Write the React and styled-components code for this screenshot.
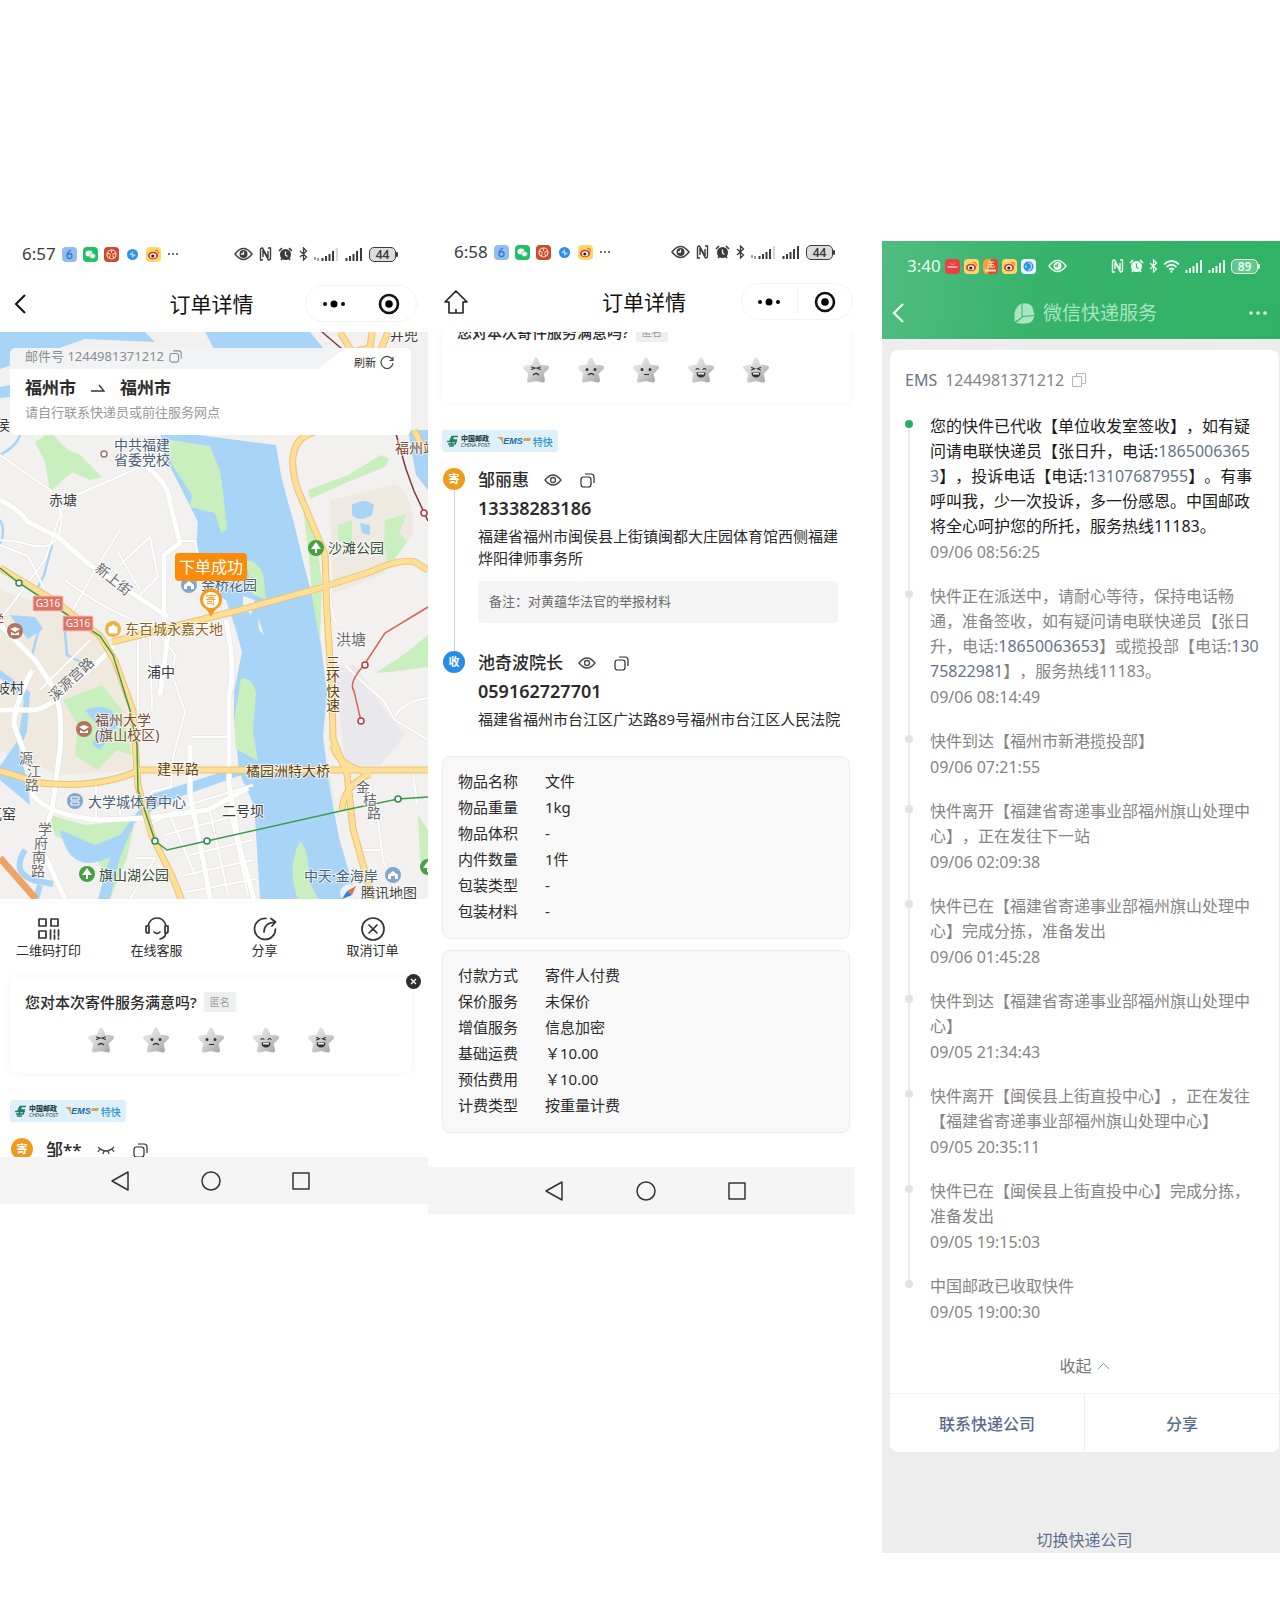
import { createGlobalStyle, styled } from "styled-components";

const GlobalStyle = createGlobalStyle`
  * { box-sizing: border-box; }
  body {
    margin: 0;
    background: #fff;
    color: #2b2b2b;
    font-family: "Noto Sans", "Noto Sans CJK SC", sans-serif;
    text-spacing-trim: space-all;
  }
  button { padding: 0; border: 0; background: none; color: inherit; font: inherit; cursor: pointer; }
  a { color: inherit; text-decoration: none; }
  h1, h2, p, ol, dl, dd { margin: 0; padding: 0; }
  svg { display: block; flex: none; }
`;

const Page = styled.main`
  display: grid;
  grid-template-columns: 428fr 427fr 425fr;
  align-items: start;
  padding-top: 230px;
`;

const Screen = styled.section`
  min-width: 0;
  overflow: hidden;
`;

const TrackingScreen = styled.section`
  min-width: 0;
  margin: 11px 0 0 27px;
  background: #ededed;
`;

/* ---------- status bar ---------- */

const StatusBar = styled.div`
  display: flex;
  align-items: center;
  justify-content: space-between;
  height: ${(p) => p.$height}px;
  padding: 0 ${(p) => p.$right}px 0 ${(p) => p.$left}px;
  color: ${(p) => p.$color || "#3c3c3c"};
`;

const StatusGroup = styled.div`
  display: flex;
  align-items: center;
  gap: ${(p) => p.$gap}px;
`;

const Time = styled.span`
  font-size: 17px;
  line-height: 24px;
`;

const Battery = styled.span`
  position: relative;
  width: 27px;
  height: 15px;
  border: 1px solid currentColor;
  border-radius: 5px;
  background: ${(p) => p.$fill};
  font-size: 12px;
  font-weight: 600;
  line-height: 13px;
  text-align: center;

  &::after {
    content: "";
    position: absolute;
    top: 4px;
    right: -3px;
    width: 2px;
    height: 5px;
    border-radius: 1px;
    background: currentColor;
  }
`;

const AppIcon = ({ kind }) => (
  <svg width="15" height="15" viewBox="0 0 15 15" aria-hidden="true">
    {kind === "browser" && (
      <>
        <rect width="15" height="15" rx="4" fill="#8fbdf0" />
        <path d="M9 3Q5 5 5 9a2.500 2.500 0 1 0 2.500-2.500Q6 6.500 5 9" fill="none" stroke="#3675cf" strokeWidth="1.300" />
      </>
    )}
    {kind === "wechat" && (
      <>
        <rect width="15" height="15" rx="4" fill="#22c064" />
        <ellipse cx="6" cy="6.500" rx="3.500" ry="3" fill="#fff" />
        <ellipse cx="9.500" cy="9" rx="3" ry="2.500" fill="#fff" stroke="#22c064" strokeWidth=".6" />
      </>
    )}
    {kind === "court" && (
      <>
        <rect width="15" height="15" rx="4" fill="#cf4a2c" />
        <circle cx="7.500" cy="7.500" r="4.500" fill="none" stroke="#ffe0c8" strokeWidth="1.200" />
        <path d="M7.500 3v3M3.500 6l3 1.500M11.500 6l-3 1.500M5 11l1.500-2.500M10 11 8.500 8.500" stroke="#ffe0c8" strokeWidth="1.100" />
      </>
    )}
    {kind === "round" && (
      <>
        <circle cx="7.500" cy="7.500" r="5.500" fill="#2b90e8" />
        <path d="m4 8 4-4v3l3 1-4 3V8z" fill="#a9d8ff" />
      </>
    )}
    {kind === "safari" && (
      <>
        <rect width="15" height="15" rx="4" fill="#e9f5ff" />
        <circle cx="7.500" cy="7.500" r="5" fill="#2b90e8" />
        <path d="M7 4a3.500 3.500 0 0 1 0 7M5 6v3" fill="none" stroke="#b9defc" strokeWidth="1.200" />
      </>
    )}
    {kind === "weibo" && (
      <>
        <rect width="15" height="15" rx="4" fill="#ffd66a" />
        <ellipse cx="7" cy="8.500" rx="5" ry="3.800" fill="#d5382a" />
        <ellipse cx="7" cy="8.800" rx="3.200" ry="2.500" fill="#fff" />
        <circle cx="6.800" cy="9" r="1.600" fill="#222" />
        <path d="M9 3.500q3.500-.5 3.500 3" fill="none" stroke="#e9762a" strokeWidth="1.200" />
      </>
    )}
    {kind === "red" && (
      <>
        <rect width="15" height="15" rx="4" fill="#e8413f" />
        <path d="M2.500 8h10" stroke="#ffc9c2" strokeWidth="1.500" />
        <path d="M5 4.500q2.500 2 5 0" fill="none" stroke="#f58d83" />
      </>
    )}
    {kind === "shop" && (
      <>
        <rect width="15" height="15" rx="4" fill="#e8452e" />
        <path d="M0 4q0-4 4-4h4L5 15H4q-4 0-4-4Z" fill="#f2a23c" />
        <path d="M5 3h6M5 5.500h6M4 8h8M8 3v5" fill="none" stroke="#ffe9b8" strokeWidth="1.100" />
        <path d="M2 11.500h11" stroke="#ffe9b8" strokeWidth="2" />
      </>
    )}
  </svg>
);

const EyeStatus = ({ hollow }) => (
  <svg width="19" height="14" viewBox="0 0 19 14" aria-hidden="true">
    <path d="M1 7q8.500-11 17 0-8.500 11-17 0Z" fill="none" stroke="currentColor" strokeWidth="1.400" />
    <circle cx="9.500" cy="7" r="4" fill="currentColor" />
    <path d="M9.500 4.500V7H7" fill="none" stroke={hollow} strokeWidth="1.300" />
  </svg>
);

const NfcIcon = () => (
  <svg width="13" height="14" viewBox="0 0 13 14" aria-hidden="true">
    <path d="M4 13H1.500V3Q1.500 1 3.500 1L9 11V4" fill="none" stroke="currentColor" strokeWidth="1.400" />
    <path d="M9 1h2.500V11Q11.500 13 9.500 13L4 3v7" fill="none" stroke="currentColor" strokeWidth="1.400" />
  </svg>
);

const AlarmIcon = ({ hollow }) => (
  <svg width="15" height="14" viewBox="0 0 15 14" aria-hidden="true">
    <circle cx="7.500" cy="7.500" r="5.500" fill="currentColor" />
    <path d="M1 4 4 1M14 4l-3-3M3 13l1.500-2M12 13l-1.500-2" stroke="currentColor" strokeWidth="1.700" />
    <path d="M7.500 4.500v3.500l2 1.500" fill="none" stroke={hollow} strokeWidth="1.200" />
  </svg>
);

const BluetoothIcon = () => (
  <svg width="9" height="14" viewBox="0 0 9 14" aria-hidden="true">
    <path d="m1 4 6.500 6L4.500 13V1l3 3L1 10" fill="none" stroke="currentColor" strokeWidth="1.300" />
  </svg>
);

const WifiIcon = () => (
  <svg width="17" height="14" viewBox="0 0 17 14" aria-hidden="true">
    <path d="M1 5.500q7.500-7 15 0M3.500 8q5-4.500 10 0M6 10.500q2.500-2 5 0" fill="none" stroke="currentColor" strokeWidth="1.700" />
    <circle cx="8.500" cy="12.500" r="1.200" fill="currentColor" />
  </svg>
);

const SignalIcon = ({ weak }) => (
  <svg width={weak ? 25 : 18} height="14" viewBox={weak ? "-7 0 25 14" : "0 0 18 14"} aria-hidden="true">
    {weak && <path d="M-6 10v3M-3 11v3" stroke="currentColor" />}
    <path d="M1.500 14v-3M5 14V9M8.500 14V7M12 14V4" stroke="currentColor" strokeWidth="2" />
    <path d="M16 14V1" stroke="currentColor" strokeWidth="2" opacity={weak ? 0.2 : 1} />
  </svg>
);

const PhoneStatus = ({ time, height, left, right }) => (
  <StatusBar $height={height} $left={left} $right={right}>
    <StatusGroup $gap={6}>
      <Time>{time}</Time>
      <AppIcon kind="browser" />
      <AppIcon kind="wechat" />
      <AppIcon kind="court" />
      <AppIcon kind="round" />
      <AppIcon kind="weibo" />
      <svg width="13" height="4" viewBox="0 0 13 4" fill="#444" aria-hidden="true">
        <circle cx="2" cy="2" r="1" />
        <circle cx="6" cy="2" r="1" />
        <circle cx="10" cy="2" r="1" />
      </svg>
    </StatusGroup>
    <StatusGroup $gap={6}>
      <EyeStatus hollow="#fff" />
      <NfcIcon />
      <AlarmIcon hollow="#fff" />
      <BluetoothIcon />
      <SignalIcon weak />
      <SignalIcon />
      <Battery $fill="#dcdcdc">44</Battery>
    </StatusGroup>
  </StatusBar>
);

/* ---------- title bar ---------- */

const TitleBar = styled.header`
  display: grid;
  grid-template-columns: 1fr auto 1fr;
  align-items: center;
  height: ${(p) => p.$height}px;
  padding: 0 ${(p) => p.$right}px 3px ${(p) => p.$left}px;
  color: #111;
`;

const Title = styled.h1`
  padding-right: 8px;
  font-size: 21px;
  font-weight: 400;
  line-height: 30px;
`;

const Capsule = styled.div`
  display: flex;
  justify-self: end;
  width: 112px;
  height: 37px;
  border: 1px solid #f3f3f3;
  border-radius: 19px;
`;

const CapsuleButton = styled.button`
  flex: 1;
  display: grid;
  place-items: center;
`;

const CapsuleDivider = styled.span`
  width: 1px;
  margin: 6px 0;
  background: #f0f0f0;
`;

const MiniProgramCapsule = ({ divided }) => (
  <Capsule>
    <CapsuleButton aria-label="更多">
      <svg width="24" height="8" viewBox="0 0 24 8">
        <circle cx="3" cy="4" r="2" />
        <circle cx="12" cy="4" r="3.500" />
        <circle cx="21" cy="4" r="2" />
      </svg>
    </CapsuleButton>
    {divided && <CapsuleDivider />}
    <CapsuleButton aria-label="关闭">
      <svg width="22" height="22" viewBox="0 0 22 22">
        <circle cx="11" cy="11" r="9" fill="none" stroke="#111" strokeWidth="2.600" />
        <circle cx="11" cy="11" r="3.800" />
      </svg>
    </CapsuleButton>
  </Capsule>
);

const IconButton = styled.button`
  display: grid;
  place-items: center;
  justify-self: ${(p) => p.$align || "start"};
`;

const ChevronLeft = ({ width = 2 }) => (
  <svg width="12" height="20" viewBox="0 0 12 20">
    <path d="M11 1 2 10l9 9" fill="none" stroke="currentColor" strokeWidth={width} />
  </svg>
);

/* ---------- map ---------- */

const MapArea = styled.div`
  position: relative;
`;

const MapSvg = styled.svg`
  width: 100%;
  height: auto;
  text {
    font-size: 14px;
    fill: #3b3b3b;
    stroke: #fff;
    stroke-width: 2px;
    stroke-opacity: 0.7;
    paint-order: stroke;
  }
  .road { fill: #6b6b6b; }
  .blue { fill: #4d5f74; }
  .park { fill: #36523a; }
  .brown { fill: #7d4a36; }
  .shop { fill: #8f6420; }
  .major { fill: #5f4413; }
`;

const wideRoads = [
  "M0 500q20 10 28 22l30 15 32 28 78 52",
  "M145 465q25 20 25 38l10 40-16 12v70l4 10-8 60",
  "M0 625 35 660 55 690q8 25 5 60l-8 60-12 35 25 54",
  "M0 710h35q20-5 35-25l25-20 20-20",
  "M32 670q-18 35-18 55l15 40 4 30q15 20 65 25l50-2 60-8 40-22",
  "M226 620q10 50 3 75v90l10 60 15 54",
  "M190 745v50l15 75 5 29",
];

const roads = [
  "M0 455 50 490 62 515 60 530",
  "M60 530q-5 25-40 12L0 540",
  "M145 465 65 500 45 560 0 620",
  "M0 545 28 556 45 590",
  "M72 612 95 570 120 530",
  "M140 590 118 552M120 565l30-28 8 40-20 20",
  "M180 541h15l6 30",
  "M65 580q40 30 70 40M90 640 40 690",
  "M96 785v33M120 795v20",
  "M138 640v70M150 640l2 68M160 635l15 20-2 22 12 35-12 45-2 30-20 5v8",
  "M192 737h38",
  "M148 825l40-20 65-20M165 835l80-22M190 855l62-15M185 875l68-15M186 892l70-13M170 815l25 60M210 812l18 82M228 805l20 90",
  "M135 858h20l-25 41",
  "M345 665q20 20 38 35l12 20 33 20M395 716q10-15 33-18",
  "M332 580q-5 25 5 45M345 770 360 790M355 790q-10 5-5 18M413 774l4 30M375 800l8 60 12 30M360 850h20",
];

const CityMap = () => (
  <MapSvg viewBox="0 332 428 567" role="img" aria-label="地图">
    <rect y="332" width="428" height="567" fill="#f2f1ef" />
    <path d="M330 500l65-16q20 10 18 50l-30 40-50 20Z" fill="#eeeae2" />
    <path d="M0 590 60 610 110 640 130 720 132 770 60 775 0 750Z" fill="#efe9df" />
    <path d="M335 665h20l30 45 20 25-25 30h-35Z" fill="#e9e8ec" />
    {/* parks */}
    <g fill="#c8efbd">
      <path d="M35 442l15-10 18 18 12 5 22 22-12 3-18-8-22 20-5-30Z" />
      <path d="M308 490l40-15 33-20 8 4-4 8-35 14-40 18Z" />
      <path d="M338 525l14-5v24l-14-3ZM385 520l22-6-8 18 8 10-18 25-5-22Z" />
      <path d="M90 690l12-5 20 25 10 45-15-5-20 20-22-15 3-30-15-25Z" />
      <path d="M50 815l35 10 50-5-8 38-17 41H98q12-30-8-48l-35-15Z" />
      <path d="M376 673l30-20 22-18v32l-38 5ZM418 815l10 15v40l-8-10Z" />
    </g>
    {/* river and streams */}
    <g fill="#a8d4f8">
      <path d="M0 332h145l10 10-70-3-85 30ZM205 332h105l28 34-60-15-55 15ZM0 387l10-2v12l-10 1Z" />
      <path d="M160 430l4 25 14 27 10 20 10 20-2 28 8 14 2 26 20 10 10 30 6 22-8 40v25l5 55 18 40-2 6 6 95h100l-22-75-10-55-6-47 4-43-6-48-8-46-10-38-9-38-8-28-5-20-5-30Z" />
      <path d="M30 805 0 780v-14l18-26 6-40-24-22v-8l30 22-3 40-8 18 8 30Z" />
      <path d="M60 830l35 15 25-10 30-40 100-32v9l-85 30-30 20-15 35-10 42H98l12-42q-40 20-50-27Z" />
      <path d="M352 505q12-8 22 0l-2 10q-12 8-20 0ZM360 523l10 2v10l-8-2ZM408 430l8 45 12 15v-60Z" />
      <path d="M10 615l25 2 8 12-15 10-8-10ZM85 710q25-10 35 12l-20 28-8-5 8-16Z" />
    </g>
    <g fill="none" stroke="#a8d4f8" strokeWidth="2.500">
      <path d="M20 435q-4 12-20 20M0 520q6 10 0 25M52 545l-8 30-8 16M64 620l3 35 20 10M40 625l-8 30 12 15M308 332l18 24" />
      <path d="M25 850q-14 22 8 30l20 4M40 885l-4 14" strokeWidth="6" />
    </g>
    <g fill="#c8efbd">
      <path d="M170 440l40 6 10 25 4 30 3 28-6 4-6-20-25-6 2-12-20-30-6-20Z" />
      <path d="M246 560q16 2 18 20l2 20-14-6Z" />
      <path d="M241 678q12 0 15 15l-3 38 5 30-22-12-2-28Z" />
      <path d="M303 508l13 30 6 45-2 60-7-40-4-45ZM325 755l8 40 14 50-16-55ZM300 841q10 10 8 38l10 20h-20q-12-30 2-58Z" />
    </g>
    <path d="M243 596l12 4-4 15-8-10ZM258 617l6 18-5-5Z" fill="#f2f1ef" />
    {/* minor roads */}
    <g fill="none" strokeLinejoin="round">
      {roads.map((d) => <path key={d} d={d} stroke="#e3e1dd" strokeWidth="3" />)}
      {wideRoads.map((d) => <path key={d} d={d} stroke="#e3e1dd" strokeWidth="6" />)}
      {roads.map((d) => <path key={`${d}-top`} d={d} stroke="#fff" strokeWidth="2" />)}
      {wideRoads.map((d) => <path key={`${d}-top`} d={d} stroke="#fff" strokeWidth="5" />)}
    </g>
    {/* major roads */}
    {["#ecc277", "#fddf95"].map((stroke, i) => (
      <g key={stroke} fill="none" stroke={stroke} strokeWidth={i ? 5 : 7} strokeLinejoin="round">
        <path d="M340 332l12 20 18-4 2-16M388 332l-8 20M414 430l10 20M315 432q-20 5-22 25t10 45l22 52 2 60 5 80 1 45 14 35 6 55 14 50 6 25" />
        <path d="M112 642l68-17 60-15 80-22 50-16q30-14 45-10l13 8" />
        <path d="M0 568l55 33 45 35 15 25 18 50 5 75 14 50 20 40 16 40" />
        <path d="M0 771l40 12q60 6 100-13h288M333 745q5 22 38 28M342 810q2-25 28-36" />
      </g>
    ))}
    <path d="M0 858l36 41" stroke="#eea367" strokeWidth="7" />
    {/* rail lines */}
    <g fill="none" strokeWidth="1.500">
      <path d="M322 332l20 17M396 434l10 35 8 22 14 30" stroke="#7d3a42" />
      <path d="M428 607l-43 26-21 32q-16 18-10 26l7 30" stroke="#d26750" />
      <path d="M0 568l19 15 41 27 40 26 13 19 17 55 7 35 1 45 17 51 12 9 40-9 138-31 53-11 30-2" stroke="#3f9a4c" />
    </g>
    <g fill="#fff" strokeWidth="1.500">
      {[[19, 583], [155, 841], [207, 841], [398, 799]].map(([x, y]) => (
        <circle key={x} cx={x} cy={y} r="3" stroke="#2d8a55" />
      ))}
      {[[424, 513], [365, 665], [361, 721]].map(([x, y]) => (
        <circle key={x} cx={x} cy={y} r="3" stroke="#b73a45" />
      ))}
      <circle cx="104" cy="454" r="3" stroke="#9a7767" />
    </g>
    {/* G316 shields */}
    {[[33, 596], [63, 616]].map(([x, y]) => (
      <g key={x}>
        <rect x={x} y={y} width="30" height="15" rx="1" fill="#dd7465" stroke="#f3c5bd" />
        <text x={x + 15} y={y + 11} textAnchor="middle" style={{ fontSize: 10, fill: "#fff", stroke: "none" }}>G316</text>
      </g>
    ))}
    {/* points of interest */}
    {[[316, 548], [87, 874], [428, 867]].map(([x, y]) => (
      <g key={x}>
        <circle cx={x} cy={y} r="8" fill="#48a043" />
        <path d={`M${x} ${y - 6}l5 7h-4v4h-2v-4h-4Z`} fill="#fff" />
      </g>
    ))}
    {[[189, 585], [393, 875]].map(([x, y]) => (
      <g key={x}>
        <circle cx={x} cy={y} r="8" fill="#83a6cf" />
        <path d={`M${x - 5} ${y}l5-4 5 4v4h-3v-3h-4v3h-3Z`} fill="#fff" />
      </g>
    ))}
    {[[15, 631], [84, 729]].map(([x, y]) => (
      <g key={x}>
        <circle cx={x} cy={y} r="8" fill="#b4745d" />
        <path d={`M${x - 5} ${y - 2}l5-2 5 2-5 3ZM${x - 4} ${y + 1}l4 2 4-2v3h-8Z`} fill="#fff" />
      </g>
    ))}
    <circle cx="75" cy="801" r="8" fill="#83a6cf" />
    <path d="M71 797h8v3h-8zM71 802h8v3h-8z" fill="none" stroke="#fff" />
    <circle cx="113" cy="629" r="8" fill="#edb044" />
    <path d="M109 627h8v6h-8zM111 627q2-4 4 0" fill="#fff" stroke="#fff" />
    {/* labels */}
    <text x="390" y="340">井兜</text>
    <text x="-4" y="430">侯官</text>
    <text x="114" y="450" className="blue">中共福建</text>
    <text x="114" y="465" className="blue">省委党校</text>
    <text x="395" y="453" className="brown">福州站</text>
    <text x="49" y="505">赤塘</text>
    <text x="328" y="553" className="park">沙滩公园</text>
    <text x="201" y="590" className="blue">金桥花园</text>
    <text x="94" y="570" className="road" transform="rotate(39 94 570)">新上街</text>
    <text x="125" y="634" className="shop">东百城永嘉天地</text>
    <text x="336" y="645" className="road" style={{ fontSize: 15 }}>洪塘</text>
    <text x="-10" y="625" className="brown">学</text>
    <text x="-4" y="641" className="brown">)</text>
    <text x="147" y="677">浦中</text>
    <text x="-4" y="693">岐村</text>
    <text x="54" y="702" className="road" transform="rotate(-43 54 702)">溪源宫路</text>
    <text x="95" y="725" className="brown">福州大学</text>
    <text x="95" y="740" className="brown">(旗山校区)</text>
    <text className="major">
      <tspan x="326" y="667">三</tspan>
      <tspan x="326" y="681">环</tspan>
      <tspan x="326" y="696">快</tspan>
      <tspan x="326" y="710">速</tspan>
    </text>
    <text className="road">
      <tspan x="19" y="763">源</tspan>
      <tspan x="27" y="776">江</tspan>
      <tspan x="25" y="790">路</tspan>
    </text>
    <text x="157" y="774" className="major">建平路</text>
    <text x="246" y="776" className="major">橘园洲特大桥</text>
    <text x="88" y="807" className="blue">大学城体育中心</text>
    <text x="222" y="816">二号坝</text>
    <text x="-12" y="819">瓦窑</text>
    <text className="road">
      <tspan x="356" y="792">金</tspan>
      <tspan x="363" y="805">桔</tspan>
      <tspan x="367" y="818">路</tspan>
    </text>
    <text className="road">
      <tspan x="38" y="834">学</tspan>
      <tspan x="34" y="848">府</tspan>
      <tspan x="32" y="862">南</tspan>
      <tspan x="31" y="876">路</tspan>
    </text>
    <text x="99" y="880" className="park">旗山湖公园</text>
    <text x="304" y="881" className="blue">中天·金海岸</text>
    {/* provider mark */}
    <circle cx="349" cy="893" r="9" fill="#eaf3fb" />
    <path d="M356 886l-4 9-5-4Z" fill="#ec6b3a" />
    <path d="M342 899l5-8 5 4Z" fill="#2f7fd6" />
    <text x="361" y="898" style={{ fill: "#444" }}>腾讯地图</text>
    {/* pickup pin */}
    <path d="M211 617q-3-7-8-10a11 11 0 1 1 16 0q-5 3-8 10Z" fill="#f59a1c" />
    <circle cx="211" cy="600" r="8" fill="#fff" />
    <text x="211" y="604" textAnchor="middle" style={{ fontSize: 11, fill: "#f59a1c", stroke: "none" }}>寄</text>
    <rect x="175" y="553" width="72" height="28" rx="4" fill="#fa8c0c" />
    <text x="211" y="573" textAnchor="middle" style={{ fontSize: 16, fill: "#fff", stroke: "none" }}>下单成功</text>
  </MapSvg>
);

const MailCard = styled.div`
  position: absolute;
  top: 16px;
  left: 10px;
  right: 17px;
  overflow: hidden;
  border-radius: 6px;
  background: #fff;
`;

const MailTop = styled.div`
  display: flex;
  justify-content: space-between;
  height: 21px;
  background: #fff;
`;

const MailNumber = styled.div`
  display: flex;
  align-items: center;
  gap: 5px;
  width: 335px;
  padding: 0 15px 4px;
  background: #f1f3f5;
  clip-path: polygon(0 0, 100% 0, 92% 100%, 0 100%);
  color: #8d8d8d;
  font-size: 13px;
  line-height: 17px;
`;

const Refresh = styled.button`
  display: flex;
  align-items: center;
  align-self: flex-start;
  gap: 4px;
  height: 27px;
  margin-right: 17px;
  font-size: 11px;
`;

const Route = styled.p`
  display: flex;
  align-items: center;
  gap: 15px;
  padding: 6px 15px 0;
  font-size: 17px;
  font-weight: 700;
  line-height: 26px;
`;

const RouteHint = styled.p`
  padding: 2px 15px 14px;
  color: #999;
  font-size: 13px;
  line-height: 18px;
`;

const CopyIcon = ({ size = 15 }) => (
  <svg width={size} height={size} viewBox="0 0 15 15" fill="none" stroke="currentColor" strokeWidth="1.200">
    <rect x="1" y="4" width="10" height="10" rx="2.500" />
    <path d="M5 1h6q3 0 3 3v6" />
  </svg>
);

/* ---------- shared order blocks ---------- */

const Content = styled.div`
  padding: 0 ${(p) => p.$right}px 0 ${(p) => p.$left}px;
`;

const ClippedContent = styled(Content)`
  overflow: hidden;
  height: ${(p) => (p.$height ? `${p.$height}px` : "auto")};
`;

const Actions = styled.nav`
  display: flex;
  justify-content: space-between;
  padding: 18px 23px 18px 16px;
`;

const Action = styled.button`
  display: flex;
  flex-direction: column;
  align-items: center;
  width: 65px;
  font-size: 13px;
  line-height: 18px;
  white-space: nowrap;
`;

const RatingCard = styled.section`
  position: relative;
  margin-top: ${(p) => (p.$scrolled ? "-25px" : "0")};
  padding: 13px 15px 19px;
  border-radius: 8px;
  box-shadow: 0 0 8px rgba(0, 0, 0, 0.05);
`;

const RatingTitle = styled.h2`
  display: flex;
  align-items: center;
  gap: 7px;
  font-size: 15px;
  font-weight: 500;
  line-height: 24px;
`;

const Badge = styled.span`
  padding: 0 6px;
  border-radius: 3px;
  background: #efefef;
  color: #9c9c9c;
  font-size: 10px;
  font-weight: 400;
  line-height: 20px;
`;

const Stars = styled.div`
  display: flex;
  justify-content: center;
  gap: 27px;
  padding: 12px 1px 0 0;
`;

const CloseButton = styled.button`
  position: absolute;
  top: -3px;
  right: -9px;
  width: 15px;
  height: 15px;
`;

const faces = {
  非常不满意: "M9.500 11l3.500 1-3.500 1.500M18.500 11l-3.500 1 3.500 1.500M11 19q3-3 6 0",
  不满意: "M10 13.500v.1M18 13.500v.1M11 19q3-3 6 0",
  一般: "M10 13.500v.1M18 13.500v.1M12 18h4",
  满意: "M9 13.500q1.500-2 3 0M16 13.500q1.500-2 3 0",
  非常满意: "M9.500 11.500l3 1.200-3 1.300M18.500 11.500l-3 1.200 3 1.300",
};

const StarFace = ({ name, id }) => {
  const laughing = name === "满意" || name === "非常满意";
  const dotEyes = name === "不满意" || name === "一般";
  return (
    <svg width="28" height="28" viewBox="0 0 28 28">
      <linearGradient id={id} x1="0" y1="0" x2="1" y2="1">
        <stop offset="0" stopColor="#ececec" />
        <stop offset=".5" stopColor="#d0d0d0" />
        <stop offset="1" stopColor="#a4a4a4" />
      </linearGradient>
      <path
        d="M14 3.500l3 7 8 1-5.500 5.500 1.500 7.500-7-1.500-7 1.500L8.500 17 3 11.500l8-1Z"
        fill={`url(#${id})`}
        stroke={`url(#${id})`}
        strokeWidth="4"
        strokeLinejoin="round"
      />
      <path d={faces[name].split("M11 19")[0]} fill="none" stroke="#333" strokeWidth={dotEyes ? 3 : 1.1} strokeLinecap="round" />
      {faces[name].includes("M11 19") && <path d="M11 19q3-3 6 0" fill="none" stroke="#333" strokeWidth="1.300" />}
      {laughing && <path d="M9.500 16.500h9q0 5-4.500 5t-4.500-5Z" fill="#333" />}
      {laughing && <path d="M11 17h6v1.500h-6Z" fill="#eee" />}
    </svg>
  );
};

// the straight mouth has its own thin stroke, so it is left out of the eye path
faces.一般 = "M10 13.500v.1M18 13.500v.1";

const NeutralMouth = styled.span`
  position: absolute;
  left: 12px;
  bottom: 9px;
  width: 5px;
  height: 1px;
  background: #333;
`;

const StarButton = styled.button`
  position: relative;
`;

const Rating = ({ id, scrolled }) => (
  <RatingCard $scrolled={scrolled}>
    <RatingTitle>
      您对本次寄件服务满意吗?<Badge>匿名</Badge>
    </RatingTitle>
    <Stars>
      {Object.keys(faces).map((name, i) => (
        <StarButton key={name} aria-label={name}>
          <StarFace name={name} id={`${id}${i}`} />
          {name === "一般" && <NeutralMouth />}
        </StarButton>
      ))}
    </Stars>
    {!scrolled && (
      <CloseButton aria-label="关闭评价">
        <svg width="15" height="15" viewBox="0 0 15 15">
          <circle cx="7.500" cy="7.500" r="7.500" fill="#2e2e2e" />
          <path d="M5 5l5 5M10 5l-5 5" stroke="#fff" strokeWidth="1.300" />
        </svg>
      </CloseButton>
    )}
  </RatingCard>
);

const ProductTag = styled.div`
  display: inline-flex;
  align-items: center;
  height: 22px;
  margin: 27px 0 16px;
  padding: 0 5px;
  border-radius: 3px;
  background: #e0f0fb;
  vertical-align: top;
`;

const Carrier = styled.span`
  display: flex;
  flex-direction: column;
  padding: 0 7px 0 2px;
  color: #24443f;
  font-size: 7px;
  font-weight: 900;
  line-height: 8px;

  small {
    font-size: 5px;
    font-weight: 400;
    line-height: 5px;
  }
`;

const Ems = styled.span`
  color: #1e6ba6;
  font: italic 800 9px/12px "Liberation Sans", sans-serif;
`;

const Express = styled.span`
  color: #3295d6;
  font-size: 10px;
  font-weight: 500;
`;

const Product = () => (
  <ProductTag>
    <svg width="12" height="12" viewBox="0 0 12 12" fill="none" stroke="#238064" strokeWidth="1.600" aria-hidden="true">
      <path d="M11 1.500H5L3.500 5H10M0 6.500h9L8 9H1M2 11h5M6 2 4 10" />
    </svg>
    <Carrier>
      中国邮政
      <small>CHINA POST</small>
    </Carrier>
    <svg width="6" height="8" viewBox="0 0 6 8" aria-hidden="true">
      <path d="M0 0h6v8L4 3Z" fill="#d9a45a" />
    </svg>
    <Ems>EMS</Ems>
    <svg width="10" height="8" viewBox="0 0 10 8" aria-hidden="true">
      <path d="M1 1h7l-1 3H0Z" fill="#d9a45a" />
    </svg>
    <Express>特快</Express>
  </ProductTag>
);

const Party = styled.div`
  display: grid;
  grid-template-columns: 22px minmax(0, 1fr);
  column-gap: 13px;
  padding-left: 1px;
`;

const Rail = styled.div`
  display: flex;
  flex-direction: column;
  align-items: center;
`;

const Marker = styled.span`
  width: 22px;
  height: 22px;
  border-radius: 50%;
  background: ${(p) => p.$color};
  color: #fff;
  font-size: 11px;
  font-weight: 700;
  line-height: 22px;
  text-align: center;
`;

const RailLine = styled.span`
  flex: 1;
  width: 1px;
  background: #d3d3d3;
`;

const PartyName = styled.div`
  display: flex;
  align-items: center;
  font-size: 17px;
  font-weight: 500;
  line-height: 24px;

  button:first-of-type { margin: 0 18px 0 15px; }
`;

const Phone = styled.p`
  padding-top: 3px;
  font-size: 18px;
  font-weight: 600;
  line-height: 26px;
`;

const Address = styled.p`
  padding-top: 4px;
  font-size: 15px;
  line-height: 22px;
`;

const Note = styled.p`
  margin: 12px 12px 28px 0;
  padding: 10px 11px 12px;
  border-radius: 4px;
  background: #f5f5f5;
  color: #6a6a6a;
  font-size: 13px;
  line-height: 20px;
`;

const EyeIcon = ({ closed }) => (
  <svg width="18" height="16" viewBox="0 0 18 16" fill="none" stroke="#444" strokeWidth="1.300">
    {closed ? (
      <path d="M1 5q8 8 16 0M3 7l-2 3M7 9l-1 3M11 9l1 3M15 7l2 3" />
    ) : (
      <>
        <path d="M1 8q8-10 16 0-8 10-16 0Z" />
        <circle cx="9" cy="8" r="2.500" />
      </>
    )}
  </svg>
);

const NameRow = ({ name, closed }) => (
  <PartyName>
    {name}
    <button aria-label="显示或隐藏"><EyeIcon closed={closed} /></button>
    <button aria-label="复制"><CopyIcon /></button>
  </PartyName>
);

const DetailPanels = styled.div`
  padding: 26px 0 23px;
`;

const InfoPanel = styled.dl`
  display: grid;
  grid-template-columns: 87px 1fr;
  margin-bottom: 11px;
  padding: 11px 15px 14px;
  border: 1px solid #ececec;
  border-radius: 8px;
  background: #f8f8f8;
  font-size: 15px;
  line-height: 26px;
`;

const Info = ({ rows }) => (
  <InfoPanel>
    {rows.map(([label, value]) => [
      <dt key={label}>{label}</dt>,
      <dd key={`${label}-value`}>{value}</dd>,
    ])}
  </InfoPanel>
);

const SystemNav = styled.nav`
  display: flex;
  align-items: center;
  justify-content: center;
  gap: ${(p) => p.$gap}px;
  height: 47px;
  padding: 0 ${(p) => p.$right}px 0 ${(p) => p.$left}px;
  background: #f5f5f5;
`;

const PhoneNav = ({ left = 0, right = 0, gap = 66 }) => (
  <SystemNav $left={left} $right={right} $gap={gap}>
    {[
      ["返回", "M19 3v18L3 12Z"],
      ["主页", "M21 12a9 9 0 1 1-18 0 9 9 0 1 1 18 0Z"],
      ["最近", "M4 4h16v16H4Z"],
    ].map(([label, d]) => (
      <button key={label} aria-label={label}>
        <svg width="24" height="24" viewBox="0 0 24 24">
          <path d={d} fill="none" stroke="#333" strokeWidth="1.500" strokeLinejoin="round" />
        </svg>
      </button>
    ))}
  </SystemNav>
);

/* ---------- tracking ---------- */

const GreenHeader = styled.header`
  height: 98px;
  background: linear-gradient(100deg, #50bd80, #37b36b 40%, #2fb266);
  color: #e9fff2;
`;

const GreenBar = styled.div`
  display: grid;
  grid-template-columns: 1fr auto 1fr;
  align-items: center;
  height: 44px;
  padding: 0 13px 0 10px;
`;

const ServiceName = styled.h1`
  display: flex;
  align-items: center;
  gap: 8px;
  padding-left: 12px;
  color: #a9e5c2;
  font-size: 19px;
  font-weight: 400;
  line-height: 28px;
`;

const TrackCard = styled.div`
  margin: 11px 1px 0 8px;
  border-radius: 8px;
  background: #fff;
`;

const TrackNumber = styled.div`
  display: flex;
  align-items: center;
  gap: 8px;
  padding: 18px 15px 22px;
  color: #858585;
  font-size: 16px;
  line-height: 24px;

  a { color: #66738a; }
`;

const Timeline = styled.ol`
  list-style: none;
  padding: 0 16px 0 15px;
`;

const Step = styled.li`
  display: grid;
  grid-template-columns: 8px minmax(0, 1fr);
  column-gap: 17px;
  color: ${(p) => (p.$latest ? "#1b1b1b" : "#858585")};
`;

const StepRail = styled.div`
  display: flex;
  flex-direction: column;
  align-items: center;
  padding-top: ${(p) => (p.$latest ? "6px" : "0")};

  &::before {
    content: "";
    display: ${(p) => (p.$latest ? "none" : "block")};
    width: 2px;
    height: 6px;
    background: #ebebeb;
  }
  &::after {
    content: "";
    flex: 1;
    width: 2px;
    background: ${(p) => (p.$last ? "transparent" : "#ebebeb")};
  }
`;

const StepDot = styled.span`
  width: 8px;
  height: 8px;
  border-radius: 50%;
  background: ${(p) => (p.$latest ? "#27ae66" : "#e2e2e2")};
`;

const StepText = styled.p`
  font-size: 16px;
  line-height: 25px;
  word-break: break-all;

  a { color: #66738a; }
`;

const StepTime = styled.time`
  display: block;
  padding: 1px 0 19px;
  color: #858585;
  font-size: 16px;
  line-height: 25px;
`;

const Collapse = styled.button`
  display: flex;
  align-items: center;
  gap: 5px;
  margin: 10px auto 15px;
  color: #777;
  font-size: 16px;
  line-height: 24px;
`;

const CardActions = styled.div`
  display: grid;
  grid-template-columns: 1fr 1px 1fr;
  border-top: 1px solid #f4f4f4;
`;

const CardDivider = styled.span`
  background: #eee;
`;

const CardAction = styled.button`
  height: 58px;
  color: #576b8c;
  font-size: 16px;
  font-weight: 500;
`;

const SwitchCompany = styled.a`
  display: block;
  padding: 76px 0 1px 7px;
  color: #5e6f8e;
  font-size: 16px;
  line-height: 24px;
  text-align: center;
`;

const Tel = ({ children }) => <a href={`tel:${children}`}>{children}</a>;

const steps = [
  {
    text: (
      <>
        您的快件已代收【单位收发室签收】，如有疑问请电联快递员【张日升，电话:<Tel>18650063653</Tel>】，投诉电话【电话:
        <Tel>13107687955</Tel>】。有事呼叫我，少一次投诉，多一份感恩。中国邮政将全心呵护您的所托，服务热线11183。
      </>
    ),
    time: "09/06 08:56:25",
  },
  {
    text: (
      <>
        快件正在派送中，请耐心等待，保持电话畅通，准备签收，如有疑问请电联快递员【张日升，电话:<Tel>18650063653</Tel>
        】或揽投部【电话:<Tel>13075822981</Tel>】，服务热线11183。
      </>
    ),
    time: "09/06 08:14:49",
  },
  { text: "快件到达【福州市新港揽投部】", time: "09/06 07:21:55" },
  { text: "快件离开【福建省寄递事业部福州旗山处理中心】，正在发往下一站", time: "09/06 02:09:38" },
  { text: "快件已在【福建省寄递事业部福州旗山处理中心】完成分拣，准备发出", time: "09/06 01:45:28" },
  { text: "快件到达【福建省寄递事业部福州旗山处理中心】", time: "09/05 21:34:43" },
  { text: "快件离开【闽侯县上街直投中心】，正在发往【福建省寄递事业部福州旗山处理中心】", time: "09/05 20:35:11" },
  { text: "快件已在【闽侯县上街直投中心】完成分拣，准备发出", time: "09/05 19:15:03" },
  { text: "中国邮政已收取快件", time: "09/05 19:00:30" },
];

const goods = [
  ["物品名称", "文件"],
  ["物品重量", "1kg"],
  ["物品体积", "-"],
  ["内件数量", "1件"],
  ["包装类型", "-"],
  ["包装材料", "-"],
];

const payment = [
  ["付款方式", "寄件人付费"],
  ["保价服务", "未保价"],
  ["增值服务", "信息加密"],
  ["基础运费", "￥10.00"],
  ["预估费用", "￥10.00"],
  ["计费类型", "按重量计费"],
];

const actions = [
  ["二维码打印", "M2 2h7v7H2ZM14 2h7v7h-7ZM2 14h7v7H2ZM13.500 13v9M17.500 13v3M17.500 18v4M21.500 13v6M21.500 21v1"],
  ["在线客服", "M3 9q2-8 9-8t9 8M1 9h3v7H3q-2 0-2-2ZM23 9h-3v7h1q2 0 2-2ZM21 16q-1 5-6 6M9 15q3 3 6 0"],
  ["分享", "M13 1.500A10.500 10.500 0 1 0 22.500 12M11 15q0-9 11-10M18 1.500 22.500 5 19 9"],
  ["取消订单", "M23 12a11 11 0 1 1-22 0 11 11 0 1 1 22 0ZM8 8l8 8M16 8l-8 8"],
];

const OrderMapScreen = () => (
  <Screen>
    <PhoneStatus time="6:57" height={48} left={22} right={32} />
    <TitleBar $height={54} $left={14} $right={11}>
      <IconButton aria-label="返回"><ChevronLeft /></IconButton>
      <Title>订单详情</Title>
      <MiniProgramCapsule />
    </TitleBar>
    <MapArea>
      <CityMap />
      <MailCard>
        <MailTop>
          <MailNumber>
            邮件号 1244981371212 <CopyIcon size={13} />
          </MailNumber>
          <Refresh>
            刷新
            <svg width="14" height="14" viewBox="0 0 14 14" fill="none" stroke="#444" strokeWidth="1.200">
              <path d="M12.500 5A6 6 0 1 0 13 8M13 2v3.500H9.500" />
            </svg>
          </Refresh>
        </MailTop>
        <Route>
          福州市
          <svg width="14" height="8" viewBox="0 0 14 8" fill="none" stroke="#333" strokeWidth="1.300" aria-hidden="true">
            <path d="M0 7h13L8 1" />
          </svg>
          福州市
        </Route>
        <RouteHint>请自行联系快递员或前往服务网点</RouteHint>
      </MailCard>
    </MapArea>
    <Actions>
      {actions.map(([label, d]) => (
        <Action key={label}>
          <svg width="24" height="24" viewBox="0 0 24 24">
            <path d={d} fill="none" stroke="#333" strokeWidth="1.700" strokeLinecap="round" strokeLinejoin="round" />
          </svg>
          {label}
        </Action>
      ))}
    </Actions>
    <Content $left={10} $right={16}>
      <Rating id="a" />
    </Content>
    <ClippedContent $height={84} $left={10} $right={16}>
      <Product />
      <Party>
        <Rail><Marker $color="#f09a1e">寄</Marker></Rail>
        <NameRow name="邹**" closed />
      </Party>
    </ClippedContent>
    <PhoneNav right={6} />
  </Screen>
);

const OrderDetailScreen = () => (
  <Screen>
    <PhoneStatus time="6:58" height={44} left={26} right={22} />
    <TitleBar $height={58} $left={15} $right={2}>
      <IconButton aria-label="主页">
        <svg width="26" height="26" viewBox="0 0 26 26">
          <path d="M2 13 13 2l11 11h-4v11H6V13ZM13 24v-4" fill="none" stroke="#222" strokeWidth="1.600" strokeLinejoin="round" />
        </svg>
      </IconButton>
      <Title>订单详情</Title>
      <MiniProgramCapsule divided />
    </TitleBar>
    <ClippedContent $left={14} $right={5}>
      <Rating id="b" scrolled />
      <Product />
      <Party>
        <Rail>
          <Marker $color="#f09a1e">寄</Marker>
          <RailLine />
        </Rail>
        <div>
          <NameRow name="邹丽惠" />
          <Phone>13338283186</Phone>
          <Address>福建省福州市闽侯县上街镇闽都大庄园体育馆西侧福建烨阳律师事务所</Address>
          <Note>备注：对黄蕴华法官的举报材料</Note>
        </div>
        <Rail>
          <Marker $color="#2a8be6">收</Marker>
        </Rail>
        <div>
          <NameRow name="池奇波院长" />
          <Phone>059162727701</Phone>
          <Address>福建省福州市台江区广达路89号福州市台江区人民法院</Address>
        </div>
      </Party>
      <DetailPanels>
        <Info rows={goods} />
        <Info rows={payment} />
      </DetailPanels>
    </ClippedContent>
    <PhoneNav left={8} gap={67} />
  </Screen>
);

const Tracking = () => (
  <TrackingScreen>
    <GreenHeader>
      <StatusBar $height={50} $left={25} $right={22} $color="#e9fff2">
        <StatusGroup $gap={4}>
          <Time>3:40</Time>
          <AppIcon kind="red" />
          <AppIcon kind="weibo" />
          <AppIcon kind="shop" />
          <AppIcon kind="weibo" />
          <AppIcon kind="safari" />
          <StatusGroup $gap={0}>
            <svg width="8" height="14" aria-hidden="true" />
            <EyeStatus hollow="#37b36b" />
          </StatusGroup>
        </StatusGroup>
        <StatusGroup $gap={5}>
          <NfcIcon />
          <AlarmIcon hollow="#37b36b" />
          <BluetoothIcon />
          <WifiIcon />
          <SignalIcon />
          <SignalIcon />
          <Battery $fill="#62c78c">89</Battery>
        </StatusGroup>
      </StatusBar>
      <GreenBar>
        <IconButton aria-label="返回"><ChevronLeft width={2.4} /></IconButton>
        <ServiceName>
          <svg width="21" height="21" viewBox="0 0 21 21" fill="currentColor" aria-hidden="true">
            <path d="M7.500.5Q1 4 .5 11v8l7-5Z" />
            <path d="M8.500.5q7-1 10 4l2 7.500-12 1Z" />
            <path d="M2 20 9 14l11.500-1q-1 4-4 6.500-5 2-14.500.5Z" />
          </svg>
          微信快递服务
        </ServiceName>
        <IconButton aria-label="更多" $align="end">
          <svg width="18" height="6" viewBox="0 0 18 6" fill="currentColor">
            <circle cx="2" cy="3" r="1.800" />
            <circle cx="9" cy="3" r="1.800" />
            <circle cx="16" cy="3" r="1.800" />
          </svg>
        </IconButton>
      </GreenBar>
    </GreenHeader>
    <TrackCard>
      <TrackNumber>
        <a href="#ems">EMS</a>1244981371212
        <button aria-label="复制单号">
          <svg width="14" height="14" viewBox="0 0 14 14" fill="none" stroke="#b5b5b5">
            <path d="M.5 3.500h9v10h-9ZM4.500 3.500v-3h9v10h-4" />
          </svg>
        </button>
      </TrackNumber>
      <Timeline>
        {steps.map(({ text, time }, i) => (
          <Step key={time} $latest={i === 0}>
            <StepRail $latest={i === 0} $last={i === steps.length - 1}>
              <StepDot $latest={i === 0} />
            </StepRail>
            <div>
              <StepText>{text}</StepText>
              <StepTime>{time}</StepTime>
            </div>
          </Step>
        ))}
      </Timeline>
      <Collapse>
        收起
        <svg width="13" height="8" viewBox="0 0 13 8">
          <path d="M1 7l5.500-5.500L12 7" fill="none" stroke="#999" />
        </svg>
      </Collapse>
      <CardActions>
        <CardAction>联系快递公司</CardAction>
        <CardDivider />
        <CardAction>分享</CardAction>
      </CardActions>
    </TrackCard>
    <SwitchCompany href="#switch">切换快递公司</SwitchCompany>
  </TrackingScreen>
);

const App = () => (
  <>
    <GlobalStyle />
    <Page>
      <OrderMapScreen />
      <OrderDetailScreen />
      <Tracking />
    </Page>
  </>
);

export default App;
